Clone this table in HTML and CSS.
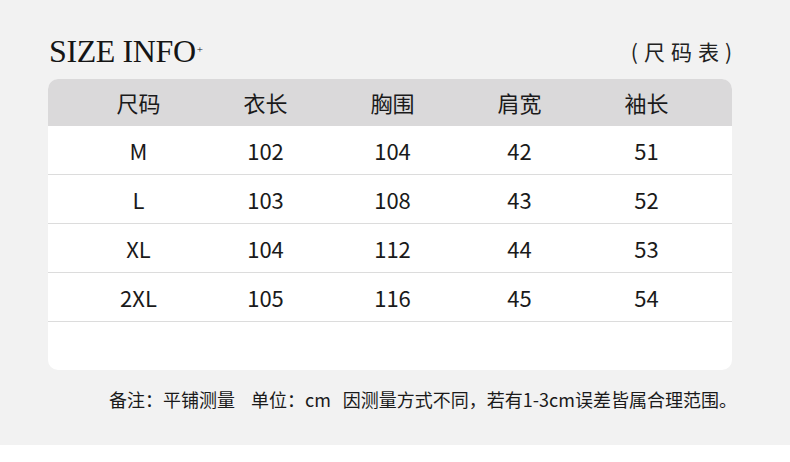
FILE: index.html
```html
<!DOCTYPE html>
<html lang="zh">
<head>
<meta charset="utf-8">
<title>SIZE INFO</title>
<link rel="stylesheet" href="styles.css">
</head>
<body>
<div class="page">
  <div class="head">
    <h1 class="title">SIZE INFO<sup class="plus">+</sup></h1>
    <div class="sub">(尺码表)</div>
  </div>
  <div class="table">
    <div class="row row-head">
      <div class="cell">尺码</div><div class="cell">衣长</div><div class="cell">胸围</div><div class="cell">肩宽</div><div class="cell">袖长</div>
    </div>
    <div class="row">
      <div class="cell">M</div><div class="cell">102</div><div class="cell">104</div><div class="cell">42</div><div class="cell">51</div>
    </div>
    <div class="row">
      <div class="cell">L</div><div class="cell">103</div><div class="cell">108</div><div class="cell">43</div><div class="cell">52</div>
    </div>
    <div class="row">
      <div class="cell">XL</div><div class="cell">104</div><div class="cell">112</div><div class="cell">44</div><div class="cell">53</div>
    </div>
    <div class="row">
      <div class="cell">2XL</div><div class="cell">105</div><div class="cell">116</div><div class="cell">45</div><div class="cell">54</div>
    </div>
    <div class="row row-empty"></div>
  </div>
  <p class="note"><span class="seg">备注：平铺测量</span><span class="seg seg-wide">单位：cm</span><span class="seg">因测量方式不同，若有1-3cm误差皆属合理范围。</span></p>
</div>
</body>
</html>
```

FILE: styles.css
```css
* { box-sizing: border-box; }
html, body { margin: 0; padding: 0; background: #ffffff; }
body {
  width: 790px;
  height: 462px;
  overflow: hidden;
  font-family: "Noto Sans CJK SC", "Noto Sans", sans-serif;
  color: #1a1a1a;
}
.page {
  background: #f2f2f2;
  height: 445px;
  padding: 0 58px 0 48px;
}
.head {
  height: 79px;
  display: flex;
  justify-content: space-between;
  align-items: flex-end;
  padding-bottom: 10px;
}
.title {
  margin: 0;
  font-family: "Liberation Serif", "Times New Roman", serif;
  font-weight: normal;
  font-size: 32px;
  line-height: 36px;
  letter-spacing: -0.4px;
  color: #151515;
  padding-left: 1px;
}
.plus {
  font-size: 11px;
  vertical-align: top;
  position: relative;
  top: -2px;
  margin-left: 1px;
}
.sub {
  font-size: 21px;
  line-height: 30px;
  letter-spacing: 6px;
  color: #222;
  margin-right: -6px;
  padding-bottom: 3px;
}
.table {
  background: #ffffff;
  border-radius: 10px;
  overflow: hidden;
  width: 684px;
}
.row {
  display: grid;
  grid-template-columns: repeat(5, 127px);
  padding-left: 27px;
  height: 49px;
  align-items: center;
  border-bottom: 1px solid #dcdcdc;
  font-size: 22px;
  color: #1a1a1a;
}
.row-head {
  background: #dad9da;
  height: 47px;
  border-bottom: none;
}
.row-head .cell { padding-bottom: 2px; }
.row .cell { text-align: center; line-height: 1; padding-top: 0; }
.row-empty { height: 48px; border-bottom: none; }
.note {
  margin: 17px 0 0 61px;
  font-size: 18px;
  line-height: 24px;
  color: #1a1a1a;
  white-space: nowrap;
  display: flex;
}
.seg-wide { margin: 0 12px 0 16px; }
```
